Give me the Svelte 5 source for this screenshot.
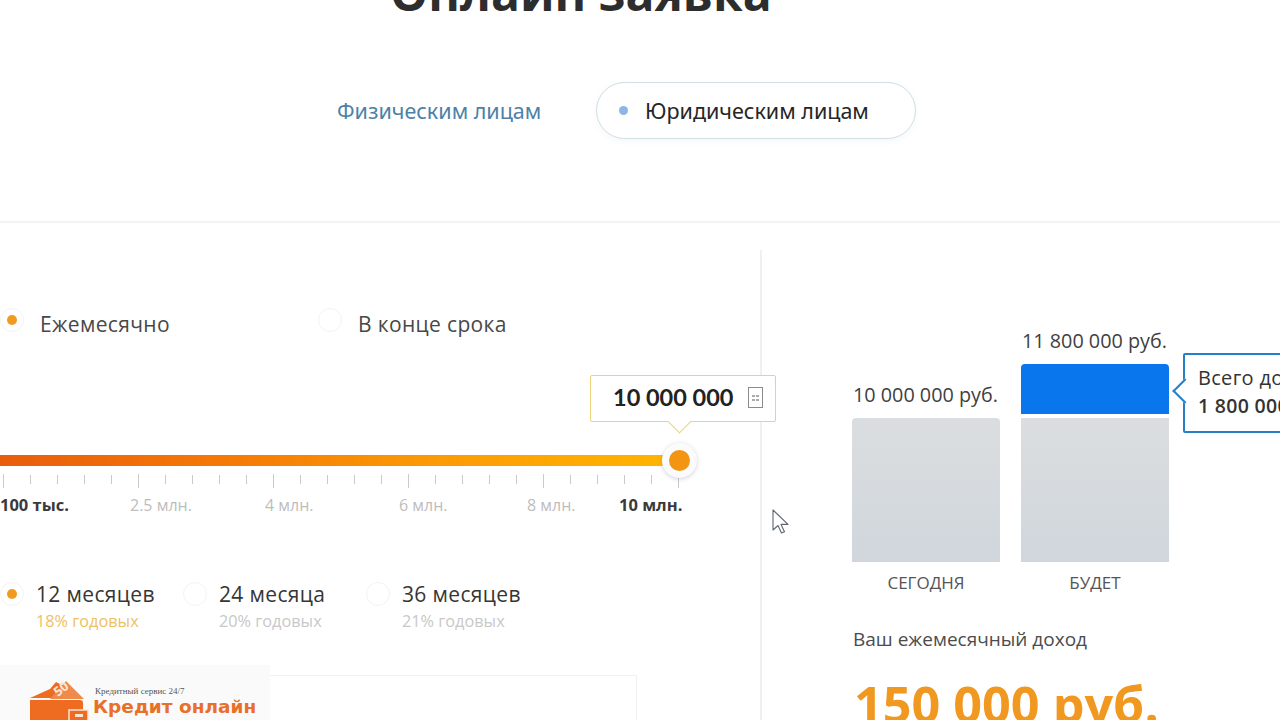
<script>
  const ticks = Array.from({ length: 26 }, (_, i) => i);
  const marks = [
    { text: '100 тыс.', on: true },
    { text: '2.5 млн.', on: false },
    { text: '4 млн.', on: false },
    { text: '6 млн.', on: false },
    { text: '8 млн.', on: false },
    { text: '10 млн.', on: true }
  ];
  const terms = [
    { months: '12 месяцев', rate: '18% годовых', on: true },
    { months: '24 месяца', rate: '20% годовых', on: false },
    { months: '36 месяцев', rate: '21% годовых', on: false }
  ];
</script>

<div class="page">
  <header class="head">
    <h1>Онлайн заявка</h1>
    <nav class="tabs">
      <a href="#fiz" class="tab-link">Физическим лицам</a>
      <div class="tab-pill"><span class="pill-dot"></span>Юридическим лицам</div>
    </nav>
  </header>

  <main class="main">
    <section class="calc">
      <div class="pay-row">
        <label class="radio pay-first"><span class="circle on"></span>Ежемесячно</label>
        <label class="radio pay-second"><span class="circle"></span>В конце срока</label>
      </div>

      <div class="slider">
        <div class="amount">
          <span>10 000 000</span>
          <svg width="15" height="21" viewBox="0 0 15 21" fill="none">
            <rect x="0.5" y="0.5" width="14" height="20" stroke="#8b8b8b" />
            <path d="M4 8h3v2H4zM8 8h3v2H8zM4 12h3v2H4zM8 12h3v2H8z" fill="#aaa" />
          </svg>
        </div>
        <div class="track"></div>
        <span class="knob"></span>
        <div class="ticks">
          {#each ticks as t}
            <i class:tall={t % 5 === 0}></i>
          {/each}
        </div>
        <div class="marks">
          {#each marks as m}
            <span class:on={m.on}>{m.text}</span>
          {/each}
        </div>
      </div>

      <div class="terms">
        {#each terms as term}
          <div class="term">
            <span class="circle" class:on={term.on}></span>
            <div>
              <div class="months">{term.months}</div>
              <div class="rate" class:on={term.on}>{term.rate}</div>
            </div>
          </div>
        {/each}
      </div>

      <div class="field"></div>
    </section>

    <section class="result">
      <div class="chart">
        <div class="col">
          <div class="sum">10 000 000 руб.</div>
          <div class="bar"></div>
        </div>
        <div class="col col-next">
          <div class="sum">11 800 000 руб.</div>
          <div class="bar-top"></div>
          <div class="bar"></div>
          <div class="callout">
            <span class="callout-tip"></span>
            <div>Всего дохода</div>
            <div class="callout-sum">1 800 000 руб.</div>
          </div>
        </div>
      </div>
      <div class="captions">
        <span>СЕГОДНЯ</span>
        <span>БУДЕТ</span>
      </div>
      <div class="income-label">Ваш ежемесячный доход</div>
      <div class="income">150 000 руб.</div>
    </section>
  </main>

  <svg class="cursor" width="18" height="26" viewBox="0 0 18 26">
    <path d="M1 1v20l5-4.500 3.500 7.500 3-1.300-3.500-7.300h7z" fill="#fff" stroke="#5d6670" stroke-width="1.100" stroke-linejoin="round" />
  </svg>

  <div class="logo">
    <svg class="wallet" width="60" height="40" viewBox="0 0 60 40">
      <path d="M0 18 20 9l6-7 8 4-12 12z" fill="#ee6c22" />
      <path d="M20 19 36 1l18 18z" fill="#ef8a4d" />
      <text x="0" y="0" transform="translate(28 17) rotate(-38)" class="note">50</text>
      <path d="M0 20h50a3 3 0 0 1 3 3v17H0z" fill="#ee6c22" />
      <path d="M39 40V30h19v10" fill="#ee6c22" stroke="#fbe3d4" stroke-width="1.500" />
      <path d="M45 34h8v3h-8z" fill="#fbe3d4" />
    </svg>
    <div class="logo-text">
      <div class="logo-small">Кредитный сервис 24/7</div>
      <div class="logo-big">Кредит онлайн</div>
    </div>
  </div>
</div>

<style>
  :global(body) {
    margin: 0;
    background: #fff;
  }
  .page {
    position: relative;
    width: 1280px;
    height: 720px;
    overflow: hidden;
    background: #fff;
    font-family: "Open Sans", "Noto Sans", sans-serif;
    color: #333;
  }

  .head {
    display: flex;
    flex-direction: column;
    height: 221px;
    border-bottom: 2px solid #f3f3f3;
  }
  h1 {
    margin: -29px 0 0 390px;
    font-size: 48px;
    line-height: 44px;
    font-weight: 700;
    color: #2d2d2d;
    white-space: nowrap;
  }
  .tabs {
    display: flex;
    align-items: center;
    margin: 67px 0 0 337px;
    font-family: "Noto Sans", sans-serif;
    font-size: 21.5px;
  }
  .tab-link {
    width: 259px;
    color: #4d81a8;
    text-decoration: none;
    white-space: nowrap;
  }
  .tab-pill {
    display: flex;
    align-items: center;
    box-sizing: border-box;
    width: 320px;
    height: 57px;
    padding-left: 22px;
    border: 1px solid #cfdfe3;
    border-radius: 29px;
    box-shadow: 0 2px 6px rgba(120, 150, 170, 0.08);
    color: #262626;
    white-space: nowrap;
  }
  .pill-dot {
    width: 9px;
    height: 9px;
    margin-right: 17px;
    border-radius: 50%;
    background: #8db6e6;
  }

  .main {
    display: grid;
    grid-template-columns: 762px 1fr;
    margin-top: 27px;
  }
  .calc {
    height: 470px;
    border-right: 2px solid #f0f0f0;
    padding-top: 58px;
  }

  .pay-row {
    display: flex;
    height: 24px;
    font-size: 21px;
    letter-spacing: 0.35px;
    line-height: 32px;
    color: #484848;
  }
  .radio {
    display: flex;
    align-items: flex-start;
    gap: 16px;
    white-space: nowrap;
  }
  .pay-first {
    width: 318px;
  }
  .circle {
    position: relative;
    display: block;
    flex: none;
    box-sizing: border-box;
    width: 24px;
    height: 24px;
    border: 1px solid #f3f3f3;
    border-radius: 50%;
    background: #fff;
  }
  .circle.on::after {
    content: "";
    position: absolute;
    left: 6px;
    top: 6px;
    width: 10px;
    height: 10px;
    border-radius: 50%;
    background: #f29a1f;
  }

  .slider {
    position: relative;
    margin-top: 123px;
  }
  .amount {
    position: absolute;
    left: 590px;
    top: -80px;
    display: flex;
    align-items: center;
    justify-content: space-between;
    box-sizing: border-box;
    width: 186px;
    height: 47px;
    padding: 0 12px 3px 22px;
    border: 1px solid #ecd27a;
    border-radius: 2px;
    background: #fff;
    font-family: "Lato", "Open Sans", sans-serif;
    font-size: 23.5px;
    font-weight: 700;
    color: #222;
    white-space: nowrap;
    z-index: 2;
  }
  .amount::after {
    content: "";
    position: absolute;
    left: 80px;
    bottom: -9px;
    width: 16px;
    height: 16px;
    border-right: 1px solid #ecd27a;
    border-bottom: 1px solid #ecd27a;
    background: #fff;
    transform: rotate(45deg);
  }
  .track {
    width: 665px;
    height: 11px;
    background: linear-gradient(90deg, #e85d0c 0%, #f57a06 35%, #fb9a05 65%, #ffb402 100%);
  }
  .knob {
    position: absolute;
    left: 662px;
    top: -12px;
    box-sizing: border-box;
    width: 35px;
    height: 35px;
    border: 7px solid #fbfbfb;
    border-radius: 50%;
    background: #f39412;
    box-shadow: 0 1px 4px rgba(130, 130, 160, 0.35);
  }
  .ticks {
    display: flex;
    align-items: flex-start;
    justify-content: space-between;
    width: 676px;
    margin: 8px 0 0 3px;
  }
  .ticks i {
    display: block;
    width: 1px;
    height: 9px;
    margin-top: 1px;
    background: #cacaca;
  }
  .ticks i.tall {
    height: 14px;
    margin-top: 0;
  }
  .marks {
    display: grid;
    grid-template-columns: 130px 135px 134px 128px 92px 62px;
    margin-top: 7px;
    font-size: 16px;
    line-height: 20px;
    color: #bdbdbd;
    white-space: nowrap;
  }
  .marks .on {
    font-size: 16.5px;
    font-weight: 700;
    color: #3a3a3a;
  }

  .terms {
    display: grid;
    grid-template-columns: 183px 183px 183px;
    margin-top: 66px;
  }
  .term {
    display: flex;
    gap: 12px;
  }
  .term .circle {
    margin-top: 1px;
  }
  .months {
    font-size: 21px;
    letter-spacing: 0.35px;
    line-height: 26px;
    color: #363636;
    white-space: nowrap;
  }
  .rate {
    margin-top: 3px;
    font-size: 16.3px;
    line-height: 22px;
    color: #c8c8c8;
    white-space: nowrap;
  }
  .rate.on {
    color: #eec15f;
  }
  .field {
    box-sizing: border-box;
    width: 637px;
    height: 60px;
    margin-top: 43px;
    border: 1px solid #f1f1f1;
  }

  .result {
    padding-left: 90px;
  }
  .chart {
    display: flex;
    align-items: flex-end;
    gap: 21px;
    height: 312px;
  }
  .col {
    position: relative;
    width: 148px;
  }
  .sum {
    margin-bottom: 13px;
    margin-left: 1px;
    font-size: 19.8px;
    line-height: 20px;
    color: #3f3f3f;
    white-space: nowrap;
  }
  .bar {
    height: 144px;
    border-radius: 4px 4px 0 0;
    background: linear-gradient(180deg, #dbdee0, #d0d6dc);
  }
  .col-next .bar {
    border-radius: 0;
  }
  .bar-top {
    height: 50px;
    margin-bottom: 4px;
    border-radius: 4px 4px 0 0;
    background: #0a76ee;
  }
  .callout {
    position: absolute;
    left: 162px;
    top: 22px;
    box-sizing: border-box;
    width: 260px;
    height: 80px;
    padding: 9px 13px;
    border: 2px solid #2580c8;
    border-radius: 2px;
    background: #fff;
    font-size: 20px;
    letter-spacing: 0.3px;
    line-height: 28px;
    color: #333;
    white-space: nowrap;
  }
  .callout-tip {
    position: absolute;
    left: -9px;
    top: 27px;
    width: 16px;
    height: 16px;
    border-left: 2px solid #2580c8;
    border-bottom: 2px solid #2580c8;
    background: #fff;
    transform: rotate(45deg);
  }
  .callout-sum {
    font-size: 19.5px;
    font-weight: 600;
  }
  .captions {
    display: grid;
    grid-template-columns: 148px 148px;
    gap: 21px;
    margin-top: 11px;
    font-size: 17px;
    line-height: 20px;
    text-align: center;
    color: #555;
  }
  .income-label {
    margin: 34px 0 0 1px;
    font-size: 19px;
    line-height: 24px;
    color: #4c4c4c;
    white-space: nowrap;
  }
  .income {
    margin: 23px 0 0 2px;
    font-size: 50.3px;
    line-height: 60px;
    font-weight: 700;
    color: #f0981f;
    white-space: nowrap;
  }

  .cursor {
    position: absolute;
    left: 772px;
    top: 509px;
  }
  .logo {
    position: absolute;
    left: 0;
    top: 665px;
    display: flex;
    box-sizing: border-box;
    width: 270px;
    height: 55px;
    padding: 15px 0 0 30px;
    background: #fafafa;
  }
  .wallet {
    flex: none;
  }
  .note {
    font-family: "Open Sans", sans-serif;
    font-size: 13px;
    font-weight: 700;
    fill: #fde6d6;
  }
  .logo-text {
    margin-left: 3px;
  }
  .logo-small {
    margin: 6px 0 0 2px;
    font-family: "Liberation Serif", serif;
    font-size: 9px;
    line-height: 10px;
    color: #555;
    white-space: nowrap;
  }
  .logo-big {
    margin-top: 1px;
    font-family: "DejaVu Sans", sans-serif;
    font-size: 18.5px;
    line-height: 20px;
    font-weight: 700;
    color: #e8702a;
    white-space: nowrap;
  }
</style>
